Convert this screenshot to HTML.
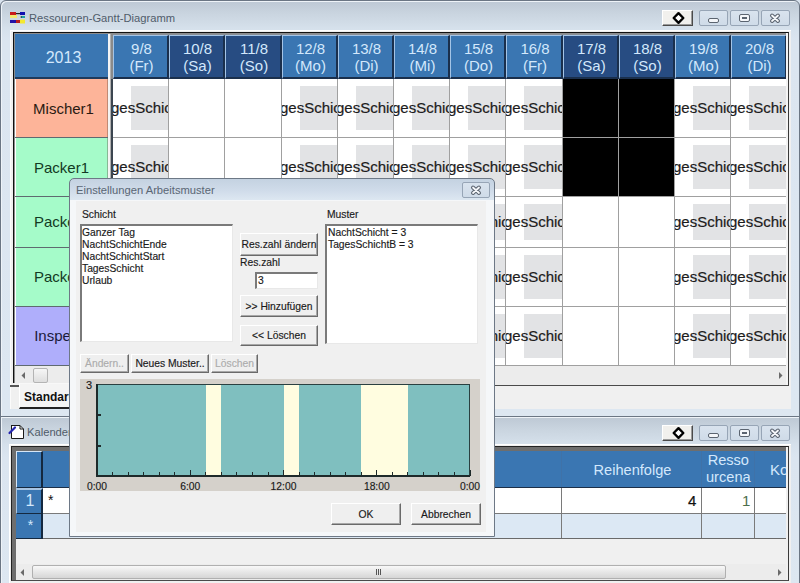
<!DOCTYPE html><html><head><meta charset="utf-8"><style>
*{margin:0;padding:0;box-sizing:border-box}
html,body{width:800px;height:583px;overflow:hidden;background:#d9e3ee;font-family:"Liberation Sans",sans-serif}
.abs{position:absolute}
.win{position:absolute;border:1px solid #6b7684;box-shadow:inset 1px 1px 0 #eef3f8;background:linear-gradient(#bfcad6 2px,#c9d4df 12px,#d6e1ec 28px,#dbe5f0 40px,#dde7f1);}
.ttl{position:absolute;font-size:11.2px;color:#505c6a;white-space:nowrap}
.wb{position:absolute;height:16px;border:1px solid #97a5b6;border-radius:2px;background:linear-gradient(#d9e3ee,#cfdbe8)}
.wbd{position:absolute;height:16px;background:#f1f0ed;border-right:1px solid #4a4a4a;border-bottom:1px solid #4a4a4a;box-shadow:inset -1px -1px 0 #9a9a9a;border-top:1px solid #fff;border-left:1px solid #fff}
.hc{position:absolute;background:#3a76b2;border-top:1px solid #a4c4e6;border-left:1px solid #a4c4e6;border-right:2px solid #1a2f4c;border-bottom:2px solid #1a2f4c;color:#d3e8fc;font-size:15px;text-align:center;line-height:17px;overflow:hidden}
.we{background:#274c82}
.cell{position:absolute;background:#fff;overflow:hidden}
.gr{position:absolute;background:#e2e3e5}
.gt{position:absolute;font-size:15px;color:#1c1c1c;-webkit-text-stroke:0.2px #1c1c1c;white-space:nowrap;line-height:17px}
.dlg{position:absolute;font-size:10.3px;color:#1a1a1a;-webkit-text-stroke:0.15px #1a1a1a}
.btn{position:absolute;background:#efefef;border-top:1px solid #fff;border-left:1px solid #fff;border-right:1px solid #6a6a6a;border-bottom:1px solid #6a6a6a;box-shadow:inset -1px -1px 0 #a8a8a8;font-size:10.3px;text-align:center;white-space:nowrap;color:#1a1a1a;-webkit-text-stroke:0.15px currentColor}
.lb{position:absolute;background:#fff;border-top:2px solid #7a7a7a;border-left:2px solid #7a7a7a;border-right:1px solid #e8e8e8;border-bottom:1px solid #e8e8e8}
.it{position:absolute;font-size:10.3px;color:#1a1a1a;-webkit-text-stroke:0.15px #1a1a1a;white-space:nowrap;line-height:12px}
</style></head><body>
<div class="win" style="left:0;top:0;width:800px;height:417px;border-radius:6px 6px 0 0"></div>
<svg class="abs" style="left:0;top:0" width="30" height="30" viewBox="0 0 30 30"><rect x="10" y="12" width="6" height="3" fill="#c81c1c"/><rect x="16" y="13" width="4" height="1.2" fill="#222"/><rect x="20" y="12" width="5" height="3" fill="#1010b0"/><rect x="10" y="15" width="7" height="3" fill="#f2ea70"/><rect x="21" y="16" width="4" height="2" fill="#20a0a0"/><rect x="20.5" y="16.5" width="1.5" height="1" fill="#222"/><rect x="10" y="20" width="6" height="3" fill="#2010a8"/><rect x="16" y="20" width="4" height="3" fill="#b81c1c"/><rect x="20" y="19.5" width="5" height="4" fill="#f4e830"/></svg>
<div class="ttl" style="left:29px;top:12px">Ressourcen-Gantt-Diagramm</div>
<div class="wbd" style="left:662px;top:10px;width:31px"></div>
<svg class="abs" style="left:671px;top:11px" width="15" height="14" viewBox="0 0 15 14"><path d="M7.5 2.2 L12.3 7 L7.5 11.8 L2.7 7 Z" fill="#fff" stroke="#000" stroke-width="2.4" stroke-linejoin="round"/></svg>
<div class="wb" style="left:699px;top:10px;width:29px"></div>
<div class="abs" style="left:708px;top:18px;width:11px;height:5px;border:1px solid #5b6470;border-radius:2px;background:#f4f6f9"></div>
<div class="wb" style="left:730px;top:10px;width:29px"></div>
<div class="abs" style="left:739px;top:14px;width:11px;height:8px;border:1.5px solid #5b6470;border-radius:2px;background:#f4f6f9"></div><div class="abs" style="left:742px;top:17px;width:5px;height:2px;background:#5b6470"></div>
<div class="wb" style="left:761px;top:10px;width:29px"></div>
<svg class="abs" style="left:768px;top:12px" width="14" height="12" viewBox="0 0 14 12"><path d="M4 3.5 L10 9 M10 3.5 L4 9" stroke="#5b6470" stroke-width="4" stroke-linecap="round"/><path d="M4 3.5 L10 9 M10 3.5 L4 9" stroke="#f6f8fb" stroke-width="1.8" stroke-linecap="round"/></svg>
<div class="abs" style="left:10px;top:30px;width:781px;height:379px;background:#f0f0f0;border-top:1px solid #fff;border-left:1px solid #fbfbfb"></div>
<div class="abs" style="left:13px;top:32px;width:776px;height:354px;background:#f4f4f4;border-top:1px solid #111;border-left:1px solid #111;border-right:1px solid #3a3a3a;border-bottom:1px solid #4a4a4a"></div>
<div class="abs" style="left:14px;top:33px;width:772px;height:1px;background:#8c8c8c"></div>
<div class="abs" style="left:14px;top:33px;width:1px;height:351px;background:#8c8c8c"></div>
<div class="abs" style="left:15px;top:34px;width:771px;height:332px;overflow:hidden;background:#fff">
<div class="abs" style="left:0;top:0;width:93px;height:45px;background:#3a76b2;border-bottom:2px solid #1f3a5c"></div>
<div class="abs" style="left:2px;top:15px;width:93px;text-align:center;font-size:16px;color:#d3e8fc">2013</div>
<div class="abs" style="left:93px;top:0;width:3px;height:332px;background:#f4f4f4"></div>
<div class="abs" style="left:95px;top:0;width:1px;height:332px;background:#b0b0b0"></div>
<div class="abs" style="left:96px;top:0;width:2px;height:45px;background:#8a8a8a"></div>
<div class="abs" style="left:96px;top:45px;width:2px;height:287px;background:#3c4650"></div>
<div class="abs" style="left:98px;top:0;width:680px;height:45px;background:#8a8f96"></div>
<div class="hc" style="left:98px;top:1px;width:56px;height:44px;padding-top:4px;padding-left:2px">9/8<br>(Fr)</div>
<div class="hc we" style="left:154px;top:1px;width:56px;height:44px;padding-top:4px;padding-left:2px">10/8<br>(Sa)</div>
<div class="hc we" style="left:210px;top:1px;width:57px;height:44px;padding-top:4px;padding-left:2px">11/8<br>(So)</div>
<div class="hc" style="left:267px;top:1px;width:56px;height:44px;padding-top:4px;padding-left:2px">12/8<br>(Mo)</div>
<div class="hc" style="left:323px;top:1px;width:56px;height:44px;padding-top:4px;padding-left:2px">13/8<br>(Di)</div>
<div class="hc" style="left:379px;top:1px;width:56px;height:44px;padding-top:4px;padding-left:2px">14/8<br>(Mi)</div>
<div class="hc" style="left:435px;top:1px;width:56px;height:44px;padding-top:4px;padding-left:2px">15/8<br>(Do)</div>
<div class="hc" style="left:491px;top:1px;width:57px;height:44px;padding-top:4px;padding-left:2px">16/8<br>(Fr)</div>
<div class="hc we" style="left:548px;top:1px;width:56px;height:44px;padding-top:4px;padding-left:2px">17/8<br>(Sa)</div>
<div class="hc we" style="left:604px;top:1px;width:56px;height:44px;padding-top:4px;padding-left:2px">18/8<br>(So)</div>
<div class="hc" style="left:660px;top:1px;width:56px;height:44px;padding-top:4px;padding-left:2px">19/8<br>(Mo)</div>
<div class="hc" style="left:716px;top:1px;width:56px;height:44px;padding-top:4px;padding-left:2px">20/8<br>(Di)</div>
<div class="abs" style="left:1px;top:45px;width:92px;height:58px;background:#fdb499;border-right:1px solid rgba(80,60,50,0.35)"></div>
<div class="abs" style="left:0;top:103px;width:93px;height:1px;background:#5f6a70"></div>
<div class="abs" style="left:2px;top:66.0px;width:93px;text-align:center;font-size:15px;color:#2a1a12;line-height:17px">Mischer1</div>
<div class="cell" style="left:98px;top:45px;width:56px;height:58px">
<div class="gr" style="left:18px;top:7px;width:38px;height:44px"></div>
<div class="gt" style="left:-2px;top:20.0px">gesSchicht</div>
</div>
<div class="cell" style="left:154px;top:45px;width:56px;height:58px">
</div>
<div class="cell" style="left:210px;top:45px;width:57px;height:58px">
</div>
<div class="cell" style="left:267px;top:45px;width:56px;height:58px">
<div class="gr" style="left:18px;top:7px;width:38px;height:44px"></div>
<div class="gt" style="left:-2px;top:20.0px">gesSchicht</div>
</div>
<div class="cell" style="left:323px;top:45px;width:56px;height:58px">
<div class="gr" style="left:18px;top:7px;width:38px;height:44px"></div>
<div class="gt" style="left:-2px;top:20.0px">gesSchicht</div>
</div>
<div class="cell" style="left:379px;top:45px;width:56px;height:58px">
<div class="gr" style="left:18px;top:7px;width:38px;height:44px"></div>
<div class="gt" style="left:-2px;top:20.0px">gesSchicht</div>
</div>
<div class="cell" style="left:435px;top:45px;width:56px;height:58px">
<div class="gr" style="left:18px;top:7px;width:38px;height:44px"></div>
<div class="gt" style="left:-2px;top:20.0px">gesSchicht</div>
</div>
<div class="cell" style="left:491px;top:45px;width:57px;height:58px">
<div class="gr" style="left:18px;top:7px;width:38px;height:44px"></div>
<div class="gt" style="left:-2px;top:20.0px">gesSchicht</div>
</div>
<div class="abs" style="left:548px;top:45px;width:56px;height:58px;background:#000"></div>
<div class="abs" style="left:604px;top:45px;width:56px;height:58px;background:#000"></div>
<div class="cell" style="left:660px;top:45px;width:56px;height:58px">
<div class="gr" style="left:18px;top:7px;width:38px;height:44px"></div>
<div class="gt" style="left:-2px;top:20.0px">gesSchicht</div>
</div>
<div class="cell" style="left:716px;top:45px;width:56px;height:58px">
<div class="gr" style="left:18px;top:7px;width:38px;height:44px"></div>
<div class="gt" style="left:-2px;top:20.0px">gesSchicht</div>
</div>
<div class="abs" style="left:98px;top:103px;width:680px;height:1px;background:#a0a0a0"></div>
<div class="abs" style="left:1px;top:104px;width:92px;height:58px;background:#a5fbc9;border-right:1px solid rgba(80,60,50,0.35)"></div>
<div class="abs" style="left:0;top:162px;width:93px;height:1px;background:#5f6a70"></div>
<div class="abs" style="left:0px;top:125.0px;width:93px;text-align:center;font-size:15px;color:#123a24;line-height:17px">Packer1</div>
<div class="cell" style="left:98px;top:104px;width:56px;height:58px">
<div class="gr" style="left:18px;top:7px;width:38px;height:44px"></div>
<div class="gt" style="left:-2px;top:20.0px">gesSchicht</div>
</div>
<div class="cell" style="left:154px;top:104px;width:56px;height:58px">
</div>
<div class="cell" style="left:210px;top:104px;width:57px;height:58px">
</div>
<div class="cell" style="left:267px;top:104px;width:56px;height:58px">
<div class="gr" style="left:18px;top:7px;width:38px;height:44px"></div>
<div class="gt" style="left:-2px;top:20.0px">gesSchicht</div>
</div>
<div class="cell" style="left:323px;top:104px;width:56px;height:58px">
<div class="gr" style="left:18px;top:7px;width:38px;height:44px"></div>
<div class="gt" style="left:-2px;top:20.0px">gesSchicht</div>
</div>
<div class="cell" style="left:379px;top:104px;width:56px;height:58px">
<div class="gr" style="left:18px;top:7px;width:38px;height:44px"></div>
<div class="gt" style="left:-2px;top:20.0px">gesSchicht</div>
</div>
<div class="cell" style="left:435px;top:104px;width:56px;height:58px">
<div class="gr" style="left:18px;top:7px;width:38px;height:44px"></div>
<div class="gt" style="left:-2px;top:20.0px">gesSchicht</div>
</div>
<div class="cell" style="left:491px;top:104px;width:57px;height:58px">
<div class="gr" style="left:18px;top:7px;width:38px;height:44px"></div>
<div class="gt" style="left:-2px;top:20.0px">gesSchicht</div>
</div>
<div class="abs" style="left:548px;top:104px;width:56px;height:58px;background:#000"></div>
<div class="abs" style="left:604px;top:104px;width:56px;height:58px;background:#000"></div>
<div class="cell" style="left:660px;top:104px;width:56px;height:58px">
<div class="gr" style="left:18px;top:7px;width:38px;height:44px"></div>
<div class="gt" style="left:-2px;top:20.0px">gesSchicht</div>
</div>
<div class="cell" style="left:716px;top:104px;width:56px;height:58px">
<div class="gr" style="left:18px;top:7px;width:38px;height:44px"></div>
<div class="gt" style="left:-2px;top:20.0px">gesSchicht</div>
</div>
<div class="abs" style="left:98px;top:162px;width:680px;height:1px;background:#a0a0a0"></div>
<div class="abs" style="left:1px;top:163px;width:92px;height:50px;background:#a5fbc9;border-right:1px solid rgba(80,60,50,0.35)"></div>
<div class="abs" style="left:0;top:213px;width:93px;height:1px;background:#5f6a70"></div>
<div class="abs" style="left:0px;top:179.0px;width:93px;text-align:center;font-size:15px;color:#123a24;line-height:17px">Packer2</div>
<div class="cell" style="left:98px;top:163px;width:56px;height:50px">
<div class="gr" style="left:18px;top:7px;width:38px;height:36px"></div>
<div class="gt" style="left:-2px;top:16.0px">gesSchicht</div>
</div>
<div class="cell" style="left:154px;top:163px;width:56px;height:50px">
</div>
<div class="cell" style="left:210px;top:163px;width:57px;height:50px">
</div>
<div class="cell" style="left:267px;top:163px;width:56px;height:50px">
<div class="gr" style="left:18px;top:7px;width:38px;height:36px"></div>
<div class="gt" style="left:-2px;top:16.0px">gesSchicht</div>
</div>
<div class="cell" style="left:323px;top:163px;width:56px;height:50px">
<div class="gr" style="left:18px;top:7px;width:38px;height:36px"></div>
<div class="gt" style="left:-2px;top:16.0px">gesSchicht</div>
</div>
<div class="cell" style="left:379px;top:163px;width:56px;height:50px">
<div class="gr" style="left:18px;top:7px;width:38px;height:36px"></div>
<div class="gt" style="left:-2px;top:16.0px">gesSchicht</div>
</div>
<div class="cell" style="left:435px;top:163px;width:56px;height:50px">
<div class="gr" style="left:18px;top:7px;width:38px;height:36px"></div>
<div class="gt" style="left:-2px;top:16.0px">gesSchicht</div>
</div>
<div class="cell" style="left:491px;top:163px;width:57px;height:50px">
<div class="gr" style="left:18px;top:7px;width:38px;height:36px"></div>
<div class="gt" style="left:-2px;top:16.0px">gesSchicht</div>
</div>
<div class="cell" style="left:548px;top:163px;width:56px;height:50px">
</div>
<div class="cell" style="left:604px;top:163px;width:56px;height:50px">
</div>
<div class="cell" style="left:660px;top:163px;width:56px;height:50px">
<div class="gr" style="left:18px;top:7px;width:38px;height:36px"></div>
<div class="gt" style="left:-2px;top:16.0px">gesSchicht</div>
</div>
<div class="cell" style="left:716px;top:163px;width:56px;height:50px">
<div class="gr" style="left:18px;top:7px;width:38px;height:36px"></div>
<div class="gt" style="left:-2px;top:16.0px">gesSchicht</div>
</div>
<div class="abs" style="left:98px;top:213px;width:680px;height:1px;background:#a0a0a0"></div>
<div class="abs" style="left:1px;top:214px;width:92px;height:58px;background:#a5fbc9;border-right:1px solid rgba(80,60,50,0.35)"></div>
<div class="abs" style="left:0;top:272px;width:93px;height:1px;background:#5f6a70"></div>
<div class="abs" style="left:0px;top:234.0px;width:93px;text-align:center;font-size:15px;color:#123a24;line-height:17px">Packer3</div>
<div class="cell" style="left:98px;top:214px;width:56px;height:58px">
<div class="gr" style="left:18px;top:7px;width:38px;height:44px"></div>
<div class="gt" style="left:-2px;top:20.0px">gesSchicht</div>
</div>
<div class="cell" style="left:154px;top:214px;width:56px;height:58px">
</div>
<div class="cell" style="left:210px;top:214px;width:57px;height:58px">
</div>
<div class="cell" style="left:267px;top:214px;width:56px;height:58px">
<div class="gr" style="left:18px;top:7px;width:38px;height:44px"></div>
<div class="gt" style="left:-2px;top:20.0px">gesSchicht</div>
</div>
<div class="cell" style="left:323px;top:214px;width:56px;height:58px">
<div class="gr" style="left:18px;top:7px;width:38px;height:44px"></div>
<div class="gt" style="left:-2px;top:20.0px">gesSchicht</div>
</div>
<div class="cell" style="left:379px;top:214px;width:56px;height:58px">
<div class="gr" style="left:18px;top:7px;width:38px;height:44px"></div>
<div class="gt" style="left:-2px;top:20.0px">gesSchicht</div>
</div>
<div class="cell" style="left:435px;top:214px;width:56px;height:58px">
<div class="gr" style="left:18px;top:7px;width:38px;height:44px"></div>
<div class="gt" style="left:-2px;top:20.0px">gesSchicht</div>
</div>
<div class="cell" style="left:491px;top:214px;width:57px;height:58px">
<div class="gr" style="left:18px;top:7px;width:38px;height:44px"></div>
<div class="gt" style="left:-2px;top:20.0px">gesSchicht</div>
</div>
<div class="cell" style="left:548px;top:214px;width:56px;height:58px">
</div>
<div class="cell" style="left:604px;top:214px;width:56px;height:58px">
</div>
<div class="cell" style="left:660px;top:214px;width:56px;height:58px">
<div class="gr" style="left:18px;top:7px;width:38px;height:44px"></div>
<div class="gt" style="left:-2px;top:20.0px">gesSchicht</div>
</div>
<div class="cell" style="left:716px;top:214px;width:56px;height:58px">
<div class="gr" style="left:18px;top:7px;width:38px;height:44px"></div>
<div class="gt" style="left:-2px;top:20.0px">gesSchicht</div>
</div>
<div class="abs" style="left:98px;top:272px;width:680px;height:1px;background:#a0a0a0"></div>
<div class="abs" style="left:1px;top:273px;width:92px;height:58px;background:#afaefb;border-right:1px solid rgba(80,60,50,0.35)"></div>
<div class="abs" style="left:0;top:331px;width:93px;height:1px;background:#5f6a70"></div>
<div class="abs" style="left:1px;top:293.0px;width:93px;text-align:center;font-size:15px;color:#1a1a3a;line-height:17px">Inspekt1</div>
<div class="cell" style="left:98px;top:273px;width:56px;height:58px">
<div class="gr" style="left:18px;top:7px;width:38px;height:44px"></div>
<div class="gt" style="left:-2px;top:20.0px">gesSchicht</div>
</div>
<div class="cell" style="left:154px;top:273px;width:56px;height:58px">
</div>
<div class="cell" style="left:210px;top:273px;width:57px;height:58px">
</div>
<div class="cell" style="left:267px;top:273px;width:56px;height:58px">
<div class="gr" style="left:18px;top:7px;width:38px;height:44px"></div>
<div class="gt" style="left:-2px;top:20.0px">gesSchicht</div>
</div>
<div class="cell" style="left:323px;top:273px;width:56px;height:58px">
<div class="gr" style="left:18px;top:7px;width:38px;height:44px"></div>
<div class="gt" style="left:-2px;top:20.0px">gesSchicht</div>
</div>
<div class="cell" style="left:379px;top:273px;width:56px;height:58px">
<div class="gr" style="left:18px;top:7px;width:38px;height:44px"></div>
<div class="gt" style="left:-2px;top:20.0px">gesSchicht</div>
</div>
<div class="cell" style="left:435px;top:273px;width:56px;height:58px">
<div class="gr" style="left:18px;top:7px;width:38px;height:44px"></div>
<div class="gt" style="left:-2px;top:20.0px">gesSchicht</div>
</div>
<div class="cell" style="left:491px;top:273px;width:57px;height:58px">
<div class="gr" style="left:18px;top:7px;width:38px;height:44px"></div>
<div class="gt" style="left:-2px;top:20.0px">gesSchicht</div>
</div>
<div class="cell" style="left:548px;top:273px;width:56px;height:58px">
</div>
<div class="cell" style="left:604px;top:273px;width:56px;height:58px">
</div>
<div class="cell" style="left:660px;top:273px;width:56px;height:58px">
<div class="gr" style="left:18px;top:7px;width:38px;height:44px"></div>
<div class="gt" style="left:-2px;top:20.0px">gesSchicht</div>
</div>
<div class="cell" style="left:716px;top:273px;width:56px;height:58px">
<div class="gr" style="left:18px;top:7px;width:38px;height:44px"></div>
<div class="gt" style="left:-2px;top:20.0px">gesSchicht</div>
</div>
<div class="abs" style="left:98px;top:331px;width:680px;height:1px;background:#a0a0a0"></div>
<div class="abs" style="left:153px;top:45px;width:1px;height:287px;background:#a0a0a0"></div>
<div class="abs" style="left:209px;top:45px;width:1px;height:287px;background:#a0a0a0"></div>
<div class="abs" style="left:266px;top:45px;width:1px;height:287px;background:#a0a0a0"></div>
<div class="abs" style="left:322px;top:45px;width:1px;height:287px;background:#a0a0a0"></div>
<div class="abs" style="left:378px;top:45px;width:1px;height:287px;background:#a0a0a0"></div>
<div class="abs" style="left:434px;top:45px;width:1px;height:287px;background:#a0a0a0"></div>
<div class="abs" style="left:490px;top:45px;width:1px;height:287px;background:#a0a0a0"></div>
<div class="abs" style="left:547px;top:45px;width:1px;height:287px;background:#a0a0a0"></div>
<div class="abs" style="left:603px;top:45px;width:1px;height:287px;background:#a0a0a0"></div>
<div class="abs" style="left:659px;top:45px;width:1px;height:287px;background:#a0a0a0"></div>
<div class="abs" style="left:715px;top:45px;width:1px;height:287px;background:#a0a0a0"></div>
<div class="abs" style="left:771px;top:45px;width:1px;height:287px;background:#a0a0a0"></div>
</div>
<div class="abs" style="left:15px;top:366px;width:771px;height:19px;background:#ececec"></div>
<svg class="abs" style="left:21px;top:372px" width="5" height="7"><path d="M4 0 L0.5 3.5 L4 7Z" fill="#6a6a6a"/></svg>
<div class="abs" style="left:33px;top:368px;width:15px;height:15px;border:1px solid #b4b4b4;border-radius:2px;background:linear-gradient(#f6f6f6,#dedede)"></div>
<svg class="abs" style="left:778px;top:372px" width="5" height="7"><path d="M1 0 L4.5 3.5 L1 7Z" fill="#6a6a6a"/></svg>
<div class="abs" style="left:10px;top:385px;width:9px;height:2px;background:#555"></div>
<div class="abs" style="left:19px;top:383px;width:60px;height:26px;background:#f4f4f4;border-bottom:2px solid #222;border-left:1px solid #fff;border-top:1px solid #f8f8f8"></div>
<div class="abs" style="left:13px;top:383px;width:6px;height:2px;background:#f0f0f0"></div>
<div class="abs" style="left:24px;top:390px;font-size:12px;font-weight:bold;color:#111">Standard</div>
<div class="win" style="left:0;top:416px;width:800px;height:180px"></div>
<svg class="abs" style="left:0;top:412px" width="30" height="30" viewBox="0 0 30 30"><path d="M11.5 13.5 H20 L23.5 17 V26.5 H11.5 Z" fill="#fff" stroke="#1a1a1a" stroke-width="1"/><path d="M20 13.5 V17 H23.5" fill="none" stroke="#1a1a1a" stroke-width="1"/><path d="M9.5 21 L15 15.5" stroke="#2424b0" stroke-width="2.2" stroke-linecap="round"/><path d="M11.5 13 V16" stroke="#1a1a1a" stroke-width="1"/></svg>
<div class="ttl" style="left:27px;top:426px">Kalender</div>
<div class="wbd" style="left:662px;top:425px;width:31px"></div>
<svg class="abs" style="left:671px;top:426px" width="15" height="14" viewBox="0 0 15 14"><path d="M7.5 2.2 L12.3 7 L7.5 11.8 L2.7 7 Z" fill="#fff" stroke="#000" stroke-width="2.4" stroke-linejoin="round"/></svg>
<div class="wb" style="left:699px;top:425px;width:29px"></div>
<div class="abs" style="left:708px;top:433px;width:11px;height:5px;border:1px solid #5b6470;border-radius:2px;background:#f4f6f9"></div>
<div class="wb" style="left:730px;top:425px;width:29px"></div>
<div class="abs" style="left:739px;top:429px;width:11px;height:8px;border:1.5px solid #5b6470;border-radius:2px;background:#f4f6f9"></div><div class="abs" style="left:742px;top:432px;width:5px;height:2px;background:#5b6470"></div>
<div class="wb" style="left:761px;top:425px;width:29px"></div>
<svg class="abs" style="left:768px;top:427px" width="14" height="12" viewBox="0 0 14 12"><path d="M4 3.5 L10 9 M10 3.5 L4 9" stroke="#5b6470" stroke-width="4" stroke-linecap="round"/><path d="M4 3.5 L10 9 M10 3.5 L4 9" stroke="#f6f8fb" stroke-width="1.8" stroke-linecap="round"/></svg>
<div class="abs" style="left:9px;top:444px;width:782px;height:140px;background:#f0f0f0;border-top:1px solid #fff;border-left:1px solid #fff"></div>
<div class="abs" style="left:11px;top:446px;width:778px;height:135px;background:#f0f0f0;border-top:1px solid #222;border-left:1px solid #222;border-right:1px solid #3a3a3a;border-bottom:1px solid #4a4a4a"></div>
<div class="abs" style="left:12px;top:447px;width:774px;height:4px;background:#6e6e6e"></div>
<div class="abs" style="left:12px;top:447px;width:4px;height:133px;background:#6e6e6e"></div>
<div class="abs" style="left:16px;top:451px;width:770px;height:129px;background:#f0f0f0;overflow:hidden">
<div class="abs" style="left:0;top:0;width:770px;height:36px;background:#3a76b2"></div>
<div class="abs" style="left:0;top:36px;width:770px;height:1px;background:#1c2f48"></div>
<div class="abs" style="left:0;top:0;width:27px;height:37px;border-top:1px solid #d6e6f6;border-left:1px solid #d6e6f6;border-right:2px solid #14283f;border-bottom:1px solid #14283f"></div>
<div class="abs" style="left:0;top:37px;width:27px;height:26px;background:#3a76b2;border-top:2px solid #a8c4e2;border-left:1px solid #a8c4e2;border-right:2px solid #14283f;border-bottom:1px solid #14283f;color:#d3e8fc;font-size:16px;text-align:center;line-height:22px;padding-left:2px">1</div>
<div class="abs" style="left:0;top:63px;width:27px;height:25px;background:#3a76b2;border-right:2px solid #14283f;border-bottom:1px solid #14283f;color:#d3e8fc;font-size:14px;text-align:center;line-height:22px;padding-left:4px">*</div>
<div class="abs" style="left:27px;top:37px;width:743px;height:26px;background:#fff"></div>
<div class="abs" style="left:27px;top:63px;width:743px;height:24px;background:#dce8f4"></div>
<div class="abs" style="left:27px;top:62px;width:743px;height:1px;background:#7a7a7a"></div>
<div class="abs" style="left:27px;top:87px;width:743px;height:1px;background:#6a6a6a"></div>
<div class="abs" style="left:32px;top:41px;font-size:14px;color:#111">*</div>
<div class="abs" style="left:545px;top:37px;width:1px;height:50px;background:#7a7a7a"></div>
<div class="abs" style="left:545px;top:0;width:1px;height:36px;background:#3f72a8"></div>
<div class="abs" style="left:685px;top:37px;width:1px;height:50px;background:#7a7a7a"></div>
<div class="abs" style="left:685px;top:0;width:1px;height:36px;background:#3f72a8"></div>
<div class="abs" style="left:738px;top:37px;width:1px;height:50px;background:#7a7a7a"></div>
<div class="abs" style="left:738px;top:0;width:1px;height:36px;background:#3f72a8"></div>
<div class="abs" style="left:577.5px;top:10.5px;font-size:14.6px;color:#d3e8fc">Reihenfolge</div>
<div class="abs" style="left:690px;top:0.5px;font-size:14.6px;color:#d3e8fc;line-height:17.5px;text-align:center">Resso<br>urcena</div>
<div class="abs" style="left:754px;top:10px;font-size:15px;color:#d3e8fc">Ko</div>
<div class="abs" style="left:672px;top:41px;font-size:15px;color:#111;-webkit-text-stroke:0.2px #111">4</div>
<div class="abs" style="left:726px;top:41px;font-size:15px;color:#4c6e4c">1</div>
</div>
<div class="abs" style="left:16px;top:564px;width:770px;height:16px;background:#ececec"></div>
<svg class="abs" style="left:20px;top:569px" width="5" height="7"><path d="M4 0 L0.5 3.5 L4 7Z" fill="#6a6a6a"/></svg>
<div class="abs" style="left:32px;top:565px;width:694px;height:14px;border:1px solid #b0b0b0;border-radius:2px;background:linear-gradient(#f8f8f8,#d6d6d6)"></div>
<div class="abs" style="left:376px;top:569px;width:1px;height:6px;background:#555;box-shadow:2px 0 #555,4px 0 #555"></div>
<svg class="abs" style="left:777px;top:569px" width="5" height="7"><path d="M1 0 L4.5 3.5 L1 7Z" fill="#6a6a6a"/></svg>
<div class="abs" style="left:69px;top:178px;width:426px;height:359px;border:1px solid #6d7886;border-radius:5px 5px 0 0;background:linear-gradient(#c4d2e1,#d0dcea 12px,#dde7f1 21px,#e9eef4 22px,#f0f0f0 24px)"></div>
<div class="abs" style="left:70px;top:200px;width:424px;height:336px;background:#f5f7f9"></div>
<div class="abs" style="left:76px;top:201px;width:410px;height:331px;background:#f0f0f0"></div>
<div class="ttl" style="left:76px;top:184px;color:#5a6674">Einstellungen Arbeitsmuster</div>
<div class="wb" style="left:462px;top:182px;width:28px"></div>
<svg class="abs" style="left:469px;top:184px" width="14" height="12" viewBox="0 0 14 12"><path d="M4 3.5 L10 9 M10 3.5 L4 9" stroke="#5b6470" stroke-width="4" stroke-linecap="round"/><path d="M4 3.5 L10 9 M10 3.5 L4 9" stroke="#f6f8fb" stroke-width="1.8" stroke-linecap="round"/></svg>
<div class="dlg" style="left:82px;top:209px">Schicht</div>
<div class="lb" style="left:80px;top:224px;width:153px;height:118px"></div>
<div class="it" style="left:82px;top:227px">Ganzer Tag</div>
<div class="it" style="left:82px;top:239px">NachtSchichtEnde</div>
<div class="it" style="left:82px;top:251px">NachtSchichtStart</div>
<div class="it" style="left:82px;top:263px">TagesSchicht</div>
<div class="it" style="left:82px;top:275px">Urlaub</div>
<div class="btn" style="left:240px;top:233px;width:78px;height:23px;line-height:22px">Res.zahl ändern</div>
<div class="dlg" style="left:240px;top:257px">Res.zahl</div>
<div class="lb" style="left:255px;top:272px;width:63px;height:17px"></div>
<div class="it" style="left:258px;top:275px">3</div>
<div class="btn" style="left:240px;top:295px;width:78px;height:22px;line-height:21px">&gt;&gt; Hinzufügen</div>
<div class="btn" style="left:240px;top:325px;width:78px;height:21px;line-height:20px">&lt;&lt; Löschen</div>
<div class="dlg" style="left:327px;top:209px">Muster</div>
<div class="lb" style="left:325px;top:224px;width:153px;height:120px"></div>
<div class="it" style="left:328px;top:227px">NachtSchicht = 3</div>
<div class="it" style="left:328px;top:239px">TagesSchichtB = 3</div>
<div class="btn" style="left:80px;top:354px;width:49px;height:19px;line-height:18px;color:#acacac">Ändern..</div>
<div class="btn" style="left:131px;top:354px;width:78px;height:19px;line-height:18px">Neues Muster..</div>
<div class="btn" style="left:211px;top:354px;width:47px;height:19px;line-height:18px;color:#acacac">Löschen</div>
<div class="abs" style="left:80px;top:379px;width:400px;height:112px;background:#d5d1cb"></div>
<div class="abs" style="left:97px;top:384px;width:373px;height:92px;background:#7fbfbf;border-top:1px solid #2a4040;border-right:1px solid #2a4040"></div>
<div class="abs" style="left:205.8px;top:385px;width:15.5px;height:91px;background:#fffde0"></div>
<div class="abs" style="left:283.5px;top:385px;width:15.5px;height:91px;background:#fffde0"></div>
<div class="abs" style="left:361.2px;top:385px;width:46.6px;height:91px;background:#fffde0"></div>
<div class="abs" style="left:96px;top:384px;width:1.5px;height:93px;background:#1e2a2a"></div>
<div class="abs" style="left:96px;top:475px;width:374px;height:2px;background:#1e2a2a"></div>
<div class="abs" style="left:97px;top:414px;width:4px;height:2px;background:#1e2a2a"></div>
<div class="abs" style="left:97px;top:445px;width:4px;height:2px;background:#1e2a2a"></div>
<div class="abs" style="left:112.0px;top:472px;width:1px;height:4px;background:#1e2a2a"></div>
<div class="abs" style="left:127.6px;top:472px;width:1px;height:4px;background:#1e2a2a"></div>
<div class="abs" style="left:143.1px;top:472px;width:1px;height:4px;background:#1e2a2a"></div>
<div class="abs" style="left:158.7px;top:472px;width:1px;height:4px;background:#1e2a2a"></div>
<div class="abs" style="left:174.2px;top:472px;width:1px;height:4px;background:#1e2a2a"></div>
<div class="abs" style="left:189.8px;top:470px;width:1px;height:6px;background:#1e2a2a"></div>
<div class="abs" style="left:205.3px;top:472px;width:1px;height:4px;background:#1e2a2a"></div>
<div class="abs" style="left:220.8px;top:472px;width:1px;height:4px;background:#1e2a2a"></div>
<div class="abs" style="left:236.4px;top:472px;width:1px;height:4px;background:#1e2a2a"></div>
<div class="abs" style="left:251.9px;top:472px;width:1px;height:4px;background:#1e2a2a"></div>
<div class="abs" style="left:267.5px;top:472px;width:1px;height:4px;background:#1e2a2a"></div>
<div class="abs" style="left:283.0px;top:470px;width:1px;height:6px;background:#1e2a2a"></div>
<div class="abs" style="left:298.5px;top:472px;width:1px;height:4px;background:#1e2a2a"></div>
<div class="abs" style="left:314.1px;top:472px;width:1px;height:4px;background:#1e2a2a"></div>
<div class="abs" style="left:329.6px;top:472px;width:1px;height:4px;background:#1e2a2a"></div>
<div class="abs" style="left:345.2px;top:472px;width:1px;height:4px;background:#1e2a2a"></div>
<div class="abs" style="left:360.7px;top:472px;width:1px;height:4px;background:#1e2a2a"></div>
<div class="abs" style="left:376.2px;top:470px;width:1px;height:6px;background:#1e2a2a"></div>
<div class="abs" style="left:391.8px;top:472px;width:1px;height:4px;background:#1e2a2a"></div>
<div class="abs" style="left:407.3px;top:472px;width:1px;height:4px;background:#1e2a2a"></div>
<div class="abs" style="left:422.9px;top:472px;width:1px;height:4px;background:#1e2a2a"></div>
<div class="abs" style="left:438.4px;top:472px;width:1px;height:4px;background:#1e2a2a"></div>
<div class="abs" style="left:454.0px;top:472px;width:1px;height:4px;background:#1e2a2a"></div>
<div class="abs" style="left:469.5px;top:470px;width:1px;height:6px;background:#1e2a2a"></div>
<div class="dlg" style="left:86px;top:379px;font-size:11px">3</div>
<div class="dlg" style="left:67.0px;top:481px;width:60px;text-align:center">0:00</div>
<div class="dlg" style="left:160.2px;top:481px;width:60px;text-align:center">6:00</div>
<div class="dlg" style="left:253.5px;top:481px;width:60px;text-align:center">12:00</div>
<div class="dlg" style="left:346.8px;top:481px;width:60px;text-align:center">18:00</div>
<div class="dlg" style="left:440.0px;top:481px;width:60px;text-align:center">0:00</div>
<div class="btn" style="left:331px;top:503px;width:70px;height:22px;line-height:21px">OK</div>
<div class="btn" style="left:411px;top:503px;width:70px;height:22px;line-height:21px">Abbrechen</div>
</body></html>
